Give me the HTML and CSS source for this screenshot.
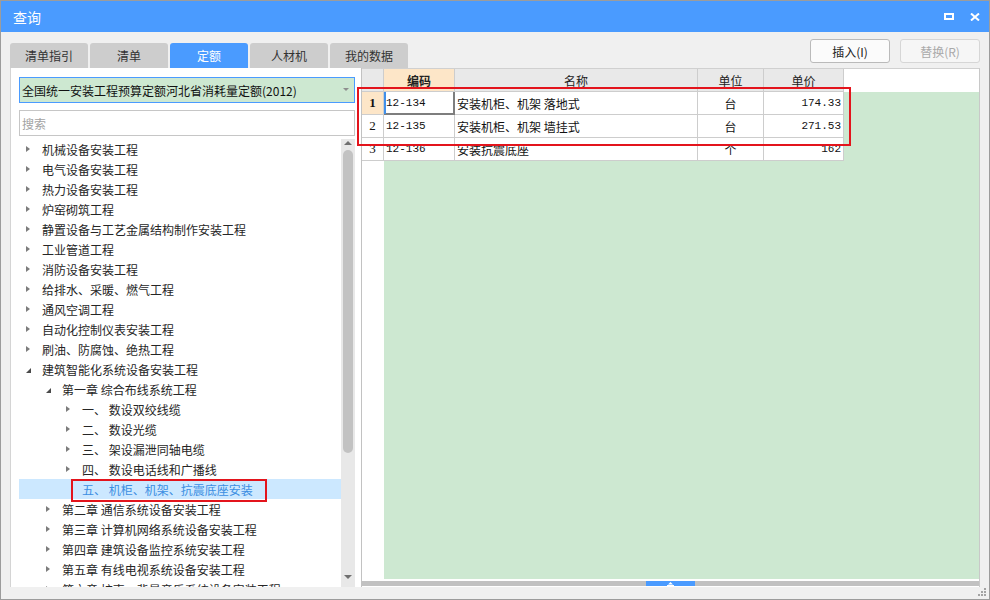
FILE: index.html
```html
<!DOCTYPE html>
<html lang="zh-CN">
<head>
<meta charset="utf-8">
<title>查询</title>
<link rel="stylesheet" href="styles.css">
</head>
<body>
<div class="window">
  <div class="titlebar">
    <span class="title">查询</span>
    <div class="win-btns">
      <svg class="ico-max" width="10" height="7" viewBox="0 0 10 7"><rect x="1" y="1" width="8" height="5" fill="none" stroke="#fff" stroke-width="2"/></svg>
      <svg class="ico-close" width="10" height="8" viewBox="0 0 10 8"><path d="M1 0.5 L9 7.5 M9 0.5 L1 7.5" stroke="#fff" stroke-width="2" fill="none"/></svg>
    </div>
  </div>
  <div class="content">
    <div class="toolbar">
      <div class="tabs">
        <div class="tab">清单指引</div>
        <div class="tab">清单</div>
        <div class="tab active">定额</div>
        <div class="tab">人材机</div>
        <div class="tab">我的数据</div>
      </div>
      <div class="actions">
        <div class="btn">插入(I)</div>
        <div class="btn disabled">替换(R)</div>
      </div>
    </div>
    <div class="panes">
      <div class="left">
        <div class="select"><span>全国统一安装工程预算定额河北省消耗量定额(2012)</span><span class="caret"></span></div>
        <div class="search">搜索</div>
        <div class="tree-wrap">
          <div class="tree">
            <div class="row l0"><span class="tw"><i class="arr"></i></span>机械设备安装工程</div>
            <div class="row l0"><span class="tw"><i class="arr"></i></span>电气设备安装工程</div>
            <div class="row l0"><span class="tw"><i class="arr"></i></span>热力设备安装工程</div>
            <div class="row l0"><span class="tw"><i class="arr"></i></span>炉窑砌筑工程</div>
            <div class="row l0"><span class="tw"><i class="arr"></i></span>静置设备与工艺金属结构制作安装工程</div>
            <div class="row l0"><span class="tw"><i class="arr"></i></span>工业管道工程</div>
            <div class="row l0"><span class="tw"><i class="arr"></i></span>消防设备安装工程</div>
            <div class="row l0"><span class="tw"><i class="arr"></i></span>给排水、采暖、燃气工程</div>
            <div class="row l0"><span class="tw"><i class="arr"></i></span>通风空调工程</div>
            <div class="row l0"><span class="tw"><i class="arr"></i></span>自动化控制仪表安装工程</div>
            <div class="row l0"><span class="tw"><i class="arr"></i></span>刷油、防腐蚀、绝热工程</div>
            <div class="row l0"><span class="tw"><i class="arr open"></i></span>建筑智能化系统设备安装工程</div>
            <div class="row l1"><span class="tw"><i class="arr open"></i></span>第一章 综合布线系统工程</div>
            <div class="row l2"><span class="tw"><i class="arr"></i></span>一、 数设双绞线缆</div>
            <div class="row l2"><span class="tw"><i class="arr"></i></span>二、 数设光缆</div>
            <div class="row l2"><span class="tw"><i class="arr"></i></span>三、 架设漏泄同轴电缆</div>
            <div class="row l2"><span class="tw"><i class="arr"></i></span>四、 数设电话线和广播线</div>
            <div class="row l2 selected"><span class="tw"></span>五、 机柜、机架、抗震底座安装<span class="mark tree-mark"></span></div>
            <div class="row l1"><span class="tw"><i class="arr"></i></span>第二章 通信系统设备安装工程</div>
            <div class="row l1"><span class="tw"><i class="arr"></i></span>第三章 计算机网络系统设备安装工程</div>
            <div class="row l1"><span class="tw"><i class="arr"></i></span>第四章 建筑设备监控系统安装工程</div>
            <div class="row l1"><span class="tw"><i class="arr"></i></span>第五章 有线电视系统设备安装工程</div>
            <div class="row l1"><span class="tw"><i class="arr"></i></span>第六章 扩声、背景音乐系统设备安装工程</div>
          </div>
          <div class="vscroll">
            <div class="sb-end"><i class="sb-up"></i></div>
            <div class="thumb"></div>
            <div class="sb-fill"></div>
            <div class="sb-end bottom"><i class="sb-down"></i></div>
          </div>
        </div>
      </div>
      <div class="right">
        <div class="grid-head">
          <div class="c c-num"></div>
          <div class="c c-code hl">编码</div>
          <div class="c c-name">名称</div>
          <div class="c c-unit">单位</div>
          <div class="c c-price">单价</div>
        </div>
        <div class="grid-body">
          <div class="grow">
            <div class="c c-num active">1</div>
            <div class="c c-code mono focus">12-134</div>
            <div class="c c-name">安装机柜、机架 落地式</div>
            <div class="c c-unit">台</div>
            <div class="c c-price mono">174.33</div>
          </div>
          <div class="grow">
            <div class="c c-num">2</div>
            <div class="c c-code mono">12-135</div>
            <div class="c c-name">安装机柜、机架 墙挂式</div>
            <div class="c c-unit">台</div>
            <div class="c c-price mono">271.53</div>
          </div>
          <div class="grow">
            <div class="c c-num">3</div>
            <div class="c c-code mono">12-136</div>
            <div class="c c-name">安装抗震底座</div>
            <div class="c c-unit">个</div>
            <div class="c c-price mono">162</div>
          </div>
        </div>
        <div class="hscroll">
          <div class="hthumb"><svg width="7" height="4" viewBox="0 0 7 4"><path d="M3.5 0 L6 2.5 L1 2.5 Z M0 3 H7 V4 H0 Z" fill="#fff"/></svg></div>
        </div>
      </div>
      <div class="mark grid-mark"></div>
    </div>
  </div>
  <svg class="grip" width="8" height="8" viewBox="0 0 8 8" fill="#a3a3a3">
    <rect x="6" y="0" width="2" height="2"/>
    <rect x="3" y="3" width="2" height="2"/><rect x="6" y="3" width="2" height="2"/>
    <rect x="0" y="6" width="2" height="2"/><rect x="3" y="6" width="2" height="2"/><rect x="6" y="6" width="2" height="2"/>
  </svg>
</div>
</body>
</html>
```

FILE: styles.css
```css
html, body {
  margin: 0;
  padding: 0;
  background: #fff;
}
body {
  font-family: "Noto Sans CJK SC", "Microsoft YaHei", sans-serif;
  font-size: 12px;
  color: #222;
}
.window {
  width: 990px;
  height: 600px;
  box-sizing: border-box;
  border: 1px solid #9c9c9c;
  background: #f0f0f0;
  display: flex;
  flex-direction: column;
  position: relative;
  overflow: hidden;
}
.titlebar {
  height: 31px;
  flex: none;
  background: #4a9bff;
  color: #fff;
  display: flex;
  align-items: center;
  padding: 0 9px 0 12px;
  font-size: 14px;
}
.title { flex: 1; }
.win-btns {
  display: flex;
  align-items: center;
  gap: 16px;
}
.ico-max { margin-top: -1px; }
.ico-close { margin-top: 0; }

.content {
  flex: 1;
  display: flex;
  flex-direction: column;
  padding: 0 9px 0 9px;
  min-height: 0;
}
.toolbar {
  height: 36px;
  flex: none;
  display: flex;
  justify-content: space-between;
}
.tabs {
  display: flex;
  gap: 2px;
  align-self: flex-end;
}
.tab {
  width: 78px;
  height: 25px;
  display: flex;
  align-items: center;
  justify-content: center;
  background: #cdcdcd;
  color: #333;
  border-radius: 3px 3px 0 0;
}
.tab.active {
  background: #4a9bff;
  color: #fff;
}
.actions {
  display: flex;
  gap: 10px;
  margin-top: 7px;
  align-items: flex-start;
}
.btn {
  width: 80px;
  height: 24px;
  box-sizing: border-box;
  border: 1px solid #bababa;
  border-radius: 3px;
  background: #fbfbfb;
  display: flex;
  align-items: center;
  justify-content: center;
  color: #222;
}
.btn.disabled {
  color: #a9a9a9;
  border-color: #d6d6d6;
  background: #f6f6f6;
}

.panes {
  height: 519px;
  flex: none;
  display: flex;
  position: relative;
}
.left {
  width: 352px;
  flex: none;
  box-sizing: border-box;
  background: #fff;
  border-left: 1px solid #d4d4d4;
  border-right: 1px solid #c2c2c2;
  padding: 9px 0 0 8px;
  display: flex;
  flex-direction: column;
}
.select {
  width: 336px;
  height: 26px;
  flex: none;
  box-sizing: border-box;
  border: 1px solid #4a9bff;
  background: #cde8d1;
  display: flex;
  align-items: center;
  padding-left: 2px;
  color: #111;
}
.caret {
  margin-left: auto;
  margin-right: 5px;
  width: 0;
  height: 0;
  border-left: 3px solid transparent;
  border-right: 3px solid transparent;
  border-top: 3px solid #8e8e8e;
  margin-top: -1px;
}
.search {
  width: 336px;
  height: 26px;
  flex: none;
  margin-top: 7px;
  box-sizing: border-box;
  border: 1px solid #c6c6c6;
  display: flex;
  align-items: center;
  padding-left: 2px;
  color: #a3a3a3;
}
.tree-wrap {
  margin-top: 3px;
  flex: 1;
  min-height: 0;
  display: flex;
  width: 336px;
}
.tree {
  flex: 1;
  overflow: hidden;
}
.row {
  height: 20px;
  display: flex;
  align-items: center;
  white-space: pre;
  color: #262626;
  position: relative;
}
.row.l0 { padding-left: 7px; }
.row.l1 { padding-left: 27px; }
.row.l2 { padding-left: 47px; }
.row.selected {
  background: #cce8ff;
  color: #3b8ee2;
}
.tw {
  width: 16px;
  flex: none;
  display: flex;
  align-items: center;
}
.arr {
  display: block;
  width: 0;
  height: 0;
  border-left: 4.5px solid #7c7c7c;
  border-top: 3.5px solid transparent;
  border-bottom: 3.5px solid transparent;
  margin-left: 0;
}
.arr.open {
  border-left: 5px solid transparent;
  border-top: none;
  border-bottom: 5px solid #4a4a4a;
  margin-top: 2px;
  margin-left: 0;
}
.vscroll {
  width: 14px;
  flex: none;
  background: #e8e8e8;
  display: flex;
  flex-direction: column;
  align-items: center;
}
.sb-end {
  height: 11px;
  flex: none;
  display: flex;
  align-items: center;
  justify-content: center;
  width: 100%;
}
.sb-end.bottom { height: 12px; align-items: flex-start; padding-top: 0; }
.sb-up {
  display: block;
  width: 0; height: 0;
  border-left: 4px solid transparent;
  border-right: 4px solid transparent;
  border-bottom: 4px solid #707070;
  margin-top: -3px;
}
.sb-down {
  display: block;
  width: 0; height: 0;
  border-left: 4px solid transparent;
  border-right: 4px solid transparent;
  border-top: 4px solid #707070;
}
.thumb {
  width: 10px;
  height: 303px;
  flex: none;
  border-radius: 5px;
  background: #c2c2c2;
}
.sb-fill { flex: 1; }

.right {
  width: 618px;
  flex: none;
  box-sizing: border-box;
  background: #fff;
  border-top: 1px solid #d0d0d0;
  border-right: 1px solid #c8c8c8;
  display: flex;
  flex-direction: column;
}
.grid-head, .grow {
  display: flex;
  height: 23px;
  flex: none;
}
.c {
  box-sizing: border-box;
  height: 23px;
  display: flex;
  align-items: center;
  border-right: 1px solid #cdcdcd;
  border-bottom: 1px solid #cdcdcd;
  padding: 0 2px;
  white-space: pre;
  color: #111;
}
.c-num { width: 22px; justify-content: center; font-family: "Liberation Serif", serif; font-size: 13px; padding: 0; }
.c-code { width: 71px; }
.c-name { width: 243px; }
.c-unit { width: 66px; justify-content: center; }
.c-price { width: 80px; justify-content: flex-end; }
.grid-head .c {
  background: #e9e9e9;
  justify-content: center;
  color: #222;
}
.grid-head .c.hl {
  background: #fde6c8;
  font-weight: bold;
}
.grid-body {
  flex: 1;
  min-height: 0;
  background: linear-gradient(to right, #fff 22px, #cde8d1 22px);
}
.grow .c { background: #fff; }
.grow .c-num.active {
  background: #fde6c8;
  font-weight: bold;
}
.mono {
  font-family: "Liberation Mono", monospace;
  font-size: 11px;
}
.grow .c.focus {
  box-shadow: inset 2px 0 0 #4190ea, inset -1px 0 0 #7e7e7e, inset 0 -1px 0 #7e7e7e;
  border-right-color: #7e7e7e;
  border-bottom-color: #7e7e7e;
}
.hscroll {
  height: 5px;
  flex: none;
  margin: 2px 0 1px 0;
  background: #c1c1c1;
  display: flex;
}
.hthumb {
  width: 49px;
  margin-left: 284px;
  background: #4a9bff;
  display: flex;
  align-items: center;
  justify-content: center;
}
.hthumb svg { display: block; }

.mark {
  position: absolute;
  box-sizing: border-box;
  border: 2px solid #e3141c;
  pointer-events: none;
}
.tree-mark {
  left: 52px;
  top: 0;
  width: 196px;
  height: 23px;
}
.grid-mark {
  left: 347px;
  top: 19px;
  width: 494px;
  height: 59px;
}
.grip {
  position: absolute;
  right: 3px;
  bottom: 3px;
}
```
